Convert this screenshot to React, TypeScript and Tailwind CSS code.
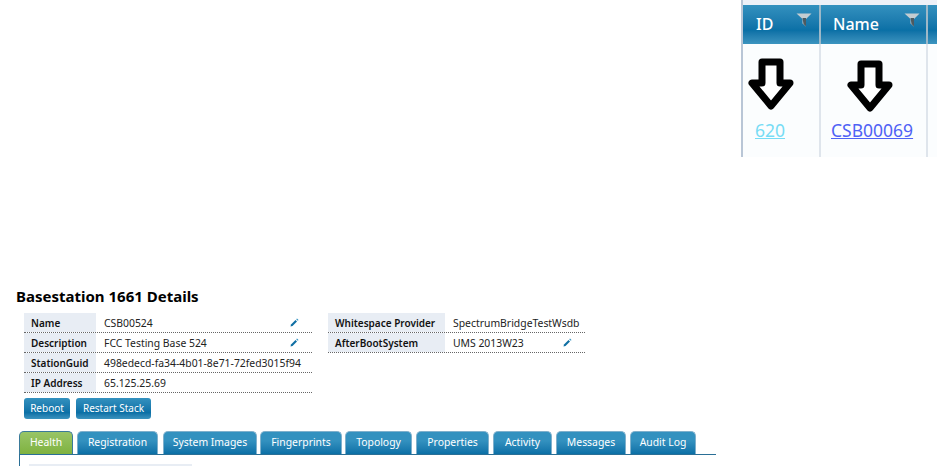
import React from 'react';

const font = "font-['Noto_Sans','Open_Sans',sans-serif]";

const leftRows = [
  { label: 'Name', value: 'CSB00524', edit: true },
  { label: 'Description', value: 'FCC Testing Base 524', edit: true },
  { label: 'StationGuid', value: '498edecd-fa34-4b01-8e71-72fed3015f94', edit: false },
  { label: 'IP Address', value: '65.125.25.69', edit: false },
];

const rightRows = [
  { label: 'Whitespace Provider', value: 'SpectrumBridgeTestWsdb', edit: false },
  { label: 'AfterBootSystem', value: 'UMS 2013W23', edit: true },
];

const tabs = [
  { name: 'Health', w: 'w-[54px]', ml: 'ml-0' },
  { name: 'Registration', w: 'w-[81px]', ml: 'ml-1' },
  { name: 'System Images', w: 'w-[94px]', ml: 'ml-[5px]' },
  { name: 'Fingerprints', w: 'w-[82px]', ml: 'ml-[3px]' },
  { name: 'Topology', w: 'w-[67px]', ml: 'ml-[3px]' },
  { name: 'Properties', w: 'w-[73px]', ml: 'ml-1' },
  { name: 'Activity', w: 'w-[59px]', ml: 'ml-1' },
  { name: 'Messages', w: 'w-[70px]', ml: 'ml-1' },
  { name: 'Audit Log', w: 'w-[66px]', ml: 'ml-1' },
];

function EditIcon() {
  return (
    <svg width="9" height="9" viewBox="0 0 9 9" className="shrink-0">
      <path d="M0.5 8.5 L1 6.5 L5.5 2 L7 3.5 L2.5 8 Z" fill="#0f6fa3" />
      <path d="M6.2 1.2 L7 0.5 L8.5 2 L7.8 2.8 Z" fill="#2f8fbf" />
    </svg>
  );
}

function Funnel() {
  return (
    <svg width="16" height="14" viewBox="0 0 16 14" className="mt-2 shrink-0">
      <path d="M0.5 0.5 H15.5 L10 6 V13.5 L6.5 10.5 V6 Z" fill="#c3ccd1" />
      <path d="M6.5 5 H10 V13.5 L7.5 11 Z" fill="#4d5a60" />
    </svg>
  );
}

function DownArrow() {
  return (
    <svg width="46" height="52" viewBox="0 0 46 52" className="block">
      <path
        d="M14 4 H32 V25 H42 L23 48 L4 25 H14 Z"
        fill="#fff"
        stroke="#000"
        strokeWidth="7"
        strokeLinejoin="round"
      />
    </svg>
  );
}

function DetailTable({ rows, labelW, valueW }: { rows: typeof leftRows; labelW: string; valueW: string }) {
  return (
    <div className="flex flex-col">
      {rows.map((r) => (
        <div key={r.label} className="flex h-5 border-b border-dotted border-[#666]">
          <div className={`${labelW} bg-[#e8edf4] pl-[7px] pt-px flex items-center text-[10px] font-semibold text-[#111]`}>
            {r.label}
          </div>
          <div className={`${valueW} pl-2 pr-[13px] flex items-center justify-between text-[10.4px] text-[#222] whitespace-nowrap`}>
            <span className="mt-0.5">{r.value}</span>
            {r.edit && <EditIcon />}
          </div>
        </div>
      ))}
    </div>
  );
}

export default function App() {
  return (
    <div className={`w-[937px] h-[466px] overflow-hidden bg-white ${font}`}>
      {/* Top crop: grid header and arrows */}
      <div className="flex justify-end h-[157px]">
        <div className="w-[196px] border-l-2 border-[#b9c6d6] flex flex-col">
          <div className="h-[5px] bg-[#edf1f8]" />
          <div className="flex h-[39px] bg-gradient-to-b from-[#3391bf] via-[#0a70a6] via-65% to-[#3b94bf] text-white text-[16px] font-medium">
            <div className="w-[78px] border-r-2 border-[#9db8c8] pl-[13px] pr-[7px] flex justify-between">
              <span className="mt-[7px] leading-[24px]">ID</span>
              <Funnel />
            </div>
            <div className="w-[107px] border-r-2 border-[#9db8c8] pl-3 pr-1.5 flex justify-between">
              <span className="mt-[7px] leading-[24px]">Name</span>
              <Funnel />
            </div>
          </div>
          <div className="flex flex-1 bg-[#fbfdfe]">
            <div className="w-[78px] border-r-2 border-[#dfe5ec] pl-[5px] pt-3.5">
              <DownArrow />
              <a className="block ml-[7px] mt-2 text-[17.5px] leading-[24px] text-[#77dcf5] underline">620</a>
            </div>
            <div className="w-[107px] border-r-2 border-[#dfe5ec] pt-4">
              <div className="ml-[26px]">
                <DownArrow />
              </div>
              <a className="block ml-[10px] mt-1.5 text-[17.5px] leading-[24px] text-[#4f62f5] underline">CSB00069</a>
            </div>
          </div>
        </div>
      </div>

      {/* Details */}
      <div className="pl-4 pt-[129px]">
        <h1 className="text-[15px] leading-[20px] font-bold text-black">Basestation 1661 Details</h1>
      </div>
      <div className="flex gap-4 pl-6 mt-[7px]">
        <DetailTable rows={leftRows} labelW="w-[72px]" valueW="w-[216px]" />
        <DetailTable rows={rightRows} labelW="w-[117px] pl-2" valueW="w-[140px]" />
      </div>

      <div className="flex gap-1.5 pl-6 mt-[5px]">
        <button className="h-[21px] w-[46px] rounded-[3px] bg-gradient-to-b from-[#3391bf] via-[#0a70a6] via-70% to-[#3b94bf] text-white text-[10px]">
          Reboot
        </button>
        <button className="h-[21px] w-[75px] rounded-[3px] bg-gradient-to-b from-[#3391bf] via-[#0a70a6] via-70% to-[#3b94bf] text-white text-[10px]">
          Restart Stack
        </button>
      </div>

      {/* Tabs */}
      <div className="flex items-end ml-[19px] mt-[13px] w-[697px] border-b border-[#2a6f96] h-[23px]">
        {tabs.map((t) => (
          <div
            key={t.name}
            className={`${t.w} ${t.ml} h-[23px] rounded-t-[5px] border border-b-0 flex items-center justify-center text-white text-[10.4px] bg-gradient-to-b ${
              t.name === 'Health'
                ? 'border-[#3a7a9a] from-[#98c566] to-[#7fb23f]'
                : 'border-[#7fb0cc] from-[#3391bf] via-[#3391bf] via-40% to-[#0a70a6]'
            }`}
          >
            {t.name}
          </div>
        ))}
      </div>
      <div className="ml-[19px] border-l border-[#2a6f96] pl-[9px] pt-[9px] h-4">
        <div className="w-[163px] h-2 bg-[#e8edf4]" />
      </div>
    </div>
  );
}
